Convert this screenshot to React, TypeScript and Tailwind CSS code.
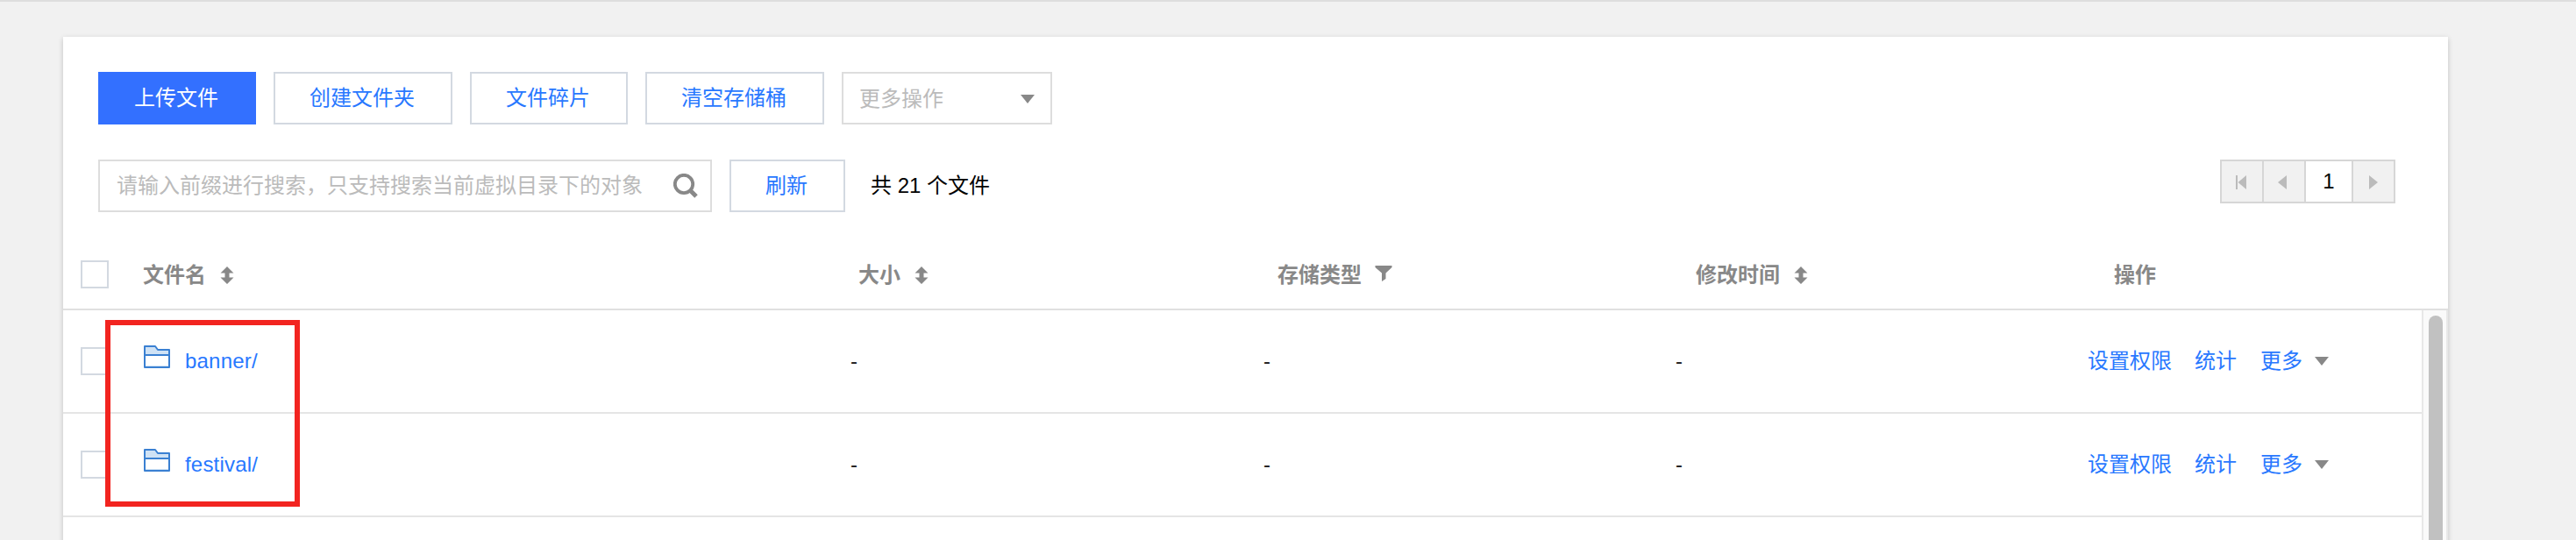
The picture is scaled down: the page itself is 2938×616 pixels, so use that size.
import type { ReactNode } from "react";

type FileRow = {
  name: string;
  size: string;
  storage: string;
  modified: string;
};

const files: FileRow[] = [
  { name: "banner/", size: "-", storage: "-", modified: "-" },
  { name: "festival/", size: "-", storage: "-", modified: "-" },
];

function OutlineButton({
  className,
  children,
}: {
  className: string;
  children: ReactNode;
}) {
  return (
    <button
      type="button"
      className={`h-[60px] border-2 border-[#d3d9e1] bg-white pr-0.5 text-[#2878ff] ${className}`}
    >
      {children}
    </button>
  );
}

function Checkbox() {
  return <span className="block size-8 shrink-0 border-2 border-[#d3d9e1] bg-white" />;
}

function CaretDown({ className }: { className?: string }) {
  return (
    <svg viewBox="0 0 16 10" className={`h-2.5 w-4 ${className ?? ""}`} aria-hidden="true">
      <path d="M0 0H16L8 10Z" fill="#888" />
    </svg>
  );
}

function SortIcon() {
  return (
    <svg viewBox="0 0 16 20" className="ml-4 h-5 w-4" aria-hidden="true">
      <path d="M8 0L15.5 7.5H10.5V12.5H15.5L8 20L0.5 12.5H5.5V7.5H0.5Z" fill="#888" />
    </svg>
  );
}

function FilterIcon() {
  return (
    <svg viewBox="0 0 20 20" className="mb-1 ml-[15px] h-5 w-5" aria-hidden="true">
      <path d="M0.5 1H19.5V3L12.5 9.5V16L8 19V9.5L0.5 3Z" fill="#888" />
    </svg>
  );
}

function SearchIcon() {
  return (
    <svg viewBox="0 0 28 28" className="size-7" fill="none" stroke="#888" aria-hidden="true">
      <circle cx="12" cy="12" r="10.2" strokeWidth="3.8" />
      <path d="M18.5 18.5L26 26" strokeWidth="5" />
    </svg>
  );
}

function FolderIcon() {
  return (
    <svg viewBox="0 0 30 26" className="h-[26px] w-[30px]" aria-hidden="true">
      <path d="M1 11V1H13L16 5H29V11Z" fill="#cfe2f5" />
      <path d="M1 23H29V25H1Z" fill="#cfe2f5" />
      <path
        d="M1 1H13L16 5H29V25H1ZM1 11H29"
        fill="none"
        stroke="#3a80d2"
        strokeWidth="2"
        strokeLinejoin="round"
      />
    </svg>
  );
}

function Pager() {
  return (
    <div className="flex h-[50px] w-[200px] border-2 border-[#d6d6d6] text-[#bbb]">
      <span className="flex w-12 items-center justify-center border-r-2 border-[#d6d6d6] bg-[#f1f1f1] pt-0.5 pr-0.5">
        <svg viewBox="0 0 12 16" className="h-4 w-3" fill="currentColor" aria-hidden="true">
          <path d="M0 0H2V16H0ZM12 0V16L2.5 8Z" />
        </svg>
      </span>
      <span className="flex w-12 items-center justify-center border-r-2 border-[#d6d6d6] bg-[#f1f1f1] pt-0.5 pr-1">
        <svg viewBox="0 0 10 16" className="h-4 w-2.5" fill="currentColor" aria-hidden="true">
          <path d="M10 0V16L0 8Z" />
        </svg>
      </span>
      <span className="flex w-[54px] items-center justify-center border-r-2 border-[#d6d6d6] font-medium text-black">
        1
      </span>
      <span className="flex flex-1 items-center justify-center bg-[#f1f1f1] pt-0.5">
        <svg viewBox="0 0 10 16" className="h-4 w-2.5" fill="currentColor" aria-hidden="true">
          <path d="M0 0V16L10 8Z" />
        </svg>
      </span>
    </div>
  );
}

function Toolbar() {
  return (
    <div className="flex gap-5">
      <button type="button" className="h-[60px] w-[180px] bg-[#3370ff] pr-0.5 text-white">
        上传文件
      </button>
      <OutlineButton className="w-[204px]">创建文件夹</OutlineButton>
      <OutlineButton className="w-[180px]">文件碎片</OutlineButton>
      <OutlineButton className="w-[204px]">清空存储桶</OutlineButton>
      <div className="flex h-[60px] w-60 items-center justify-between border-2 border-[#ddd] pt-0.5 pr-[18px] pl-[18px] text-[#bbb]">
        更多操作
        <CaretDown />
      </div>
    </div>
  );
}

function SearchBar() {
  return (
    <div className="mt-10 flex items-start">
      <div className="flex h-[60px] w-[700px] items-center border-2 border-[#ddd] pr-3.5 pl-[19px]">
        <input
          className="h-full flex-1 outline-none placeholder:text-[#bbb]"
          placeholder="请输入前缀进行搜索，只支持搜索当前虚拟目录下的对象"
        />
        <SearchIcon />
      </div>
      <OutlineButton className="ml-5 w-[132px]">刷新</OutlineButton>
      <p className="ml-[29px] h-[60px] leading-[60px] text-black">
        共 <span className="font-medium">21</span> 个文件
      </p>
      <div className="ml-auto">
        <Pager />
      </div>
    </div>
  );
}

function FileTable() {
  return (
    <div className="mt-8">
      <div className="flex h-20 items-center border-b-2 border-[#e0e0e0] pl-5 font-bold text-[#888]">
        <div className="w-[71px]">
          <Checkbox />
        </div>
        <div className="flex w-[816px] items-center pt-0.5">
          文件名
          <SortIcon />
        </div>
        <div className="flex w-[478px] items-center pt-0.5">
          大小
          <SortIcon />
        </div>
        <div className="flex w-[477px] items-center pt-0.5">
          存储类型
          <FilterIcon />
        </div>
        <div className="flex w-[477px] items-center pt-0.5">
          修改时间
          <SortIcon />
        </div>
        <div className="pt-0.5">操作</div>
      </div>

      <div className="flex h-[262px] overflow-hidden">
        <div className="w-[2690px]">
          {files.map((file) => (
            <div
              key={file.name}
              className="flex h-[118px] items-center border-b-2 border-[#e5e5e5] pl-5 text-[#222]"
            >
              <div className="w-[72px]">
                <Checkbox />
              </div>
              <div className="flex w-[806px] items-center tracking-[0.2px] text-[#2878ff]">
                <span className="mb-2.5 w-[47px]">
                  <FolderIcon />
                </span>
                {file.name}
              </div>
              <div className="w-[471px]">{file.size}</div>
              <div className="w-[470px]">{file.storage}</div>
              <div className="w-[470px]">{file.modified}</div>
              <div className="flex items-center text-[#2878ff]">
                <a className="mr-[26px]">设置权限</a>
                <a className="mr-[27px]">统计</a>
                <a>更多</a>
                <CaretDown className="ml-3.5" />
              </div>
            </div>
          ))}
        </div>
        {/* Scrollbar */}
        <div className="w-[30px] border-x-2 border-[#e8e8e8] bg-[#fafafa] pt-1.5 pl-1.5">
          <div className="h-[400px] w-4 rounded-full bg-[#c1c1c1]" />
        </div>
      </div>
    </div>
  );
}

export default function App() {
  return (
    <div className="relative h-[616px] w-[2938px] overflow-hidden border-t-2 border-[#dedede] bg-[#f1f1f1] pt-10 pl-[72px] font-['Liberation_Sans','Noto_Sans_CJK_SC',sans-serif] text-2xl">
      <main className="h-[640px] w-[2720px] bg-white pt-10 shadow-[0_2px_6px_rgba(0,0,0,0.2)]">
        <div className="pr-[60px] pl-10">
          <Toolbar />
          <SearchBar />
        </div>
        <FileTable />
      </main>

      {/* Highlight around the folder names */}
      <div className="pointer-events-none absolute top-[363px] left-[120px] h-[213px] w-[222px] border-6 border-[#f22420]" />
    </div>
  );
}
